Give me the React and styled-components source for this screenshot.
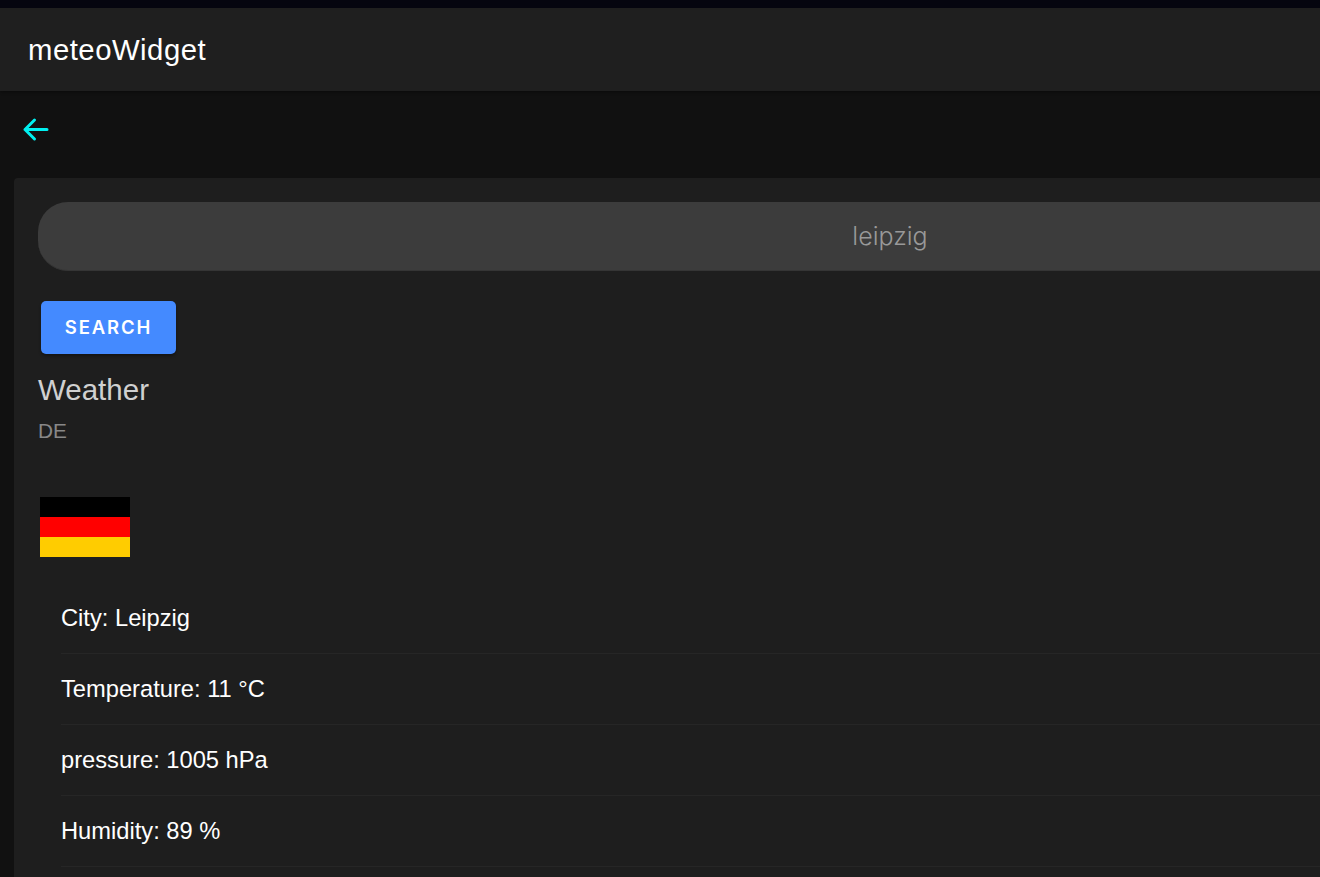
import React from "react";
import styled, { createGlobalStyle } from "styled-components";

const Global = createGlobalStyle`
  html, body { margin: 0; padding: 0; height: 100%; overflow: hidden; background: #05050f; }
  body { font-family: "Liberation Sans", Arial, sans-serif; }
  #root { padding-top: 8px; box-sizing: border-box; height: 100%; }
`;

const Page = styled.div`
  width: 1770px;
  height: 869px;
  background: #111111;
  overflow: hidden;
`;

const Header = styled.header`
  height: 83px;
  background: #1f1f1f;
  display: flex;
  align-items: center;
  padding-left: 28px;
  box-shadow: 0 1px 3px rgba(0, 0, 0, 0.4);
`;

const Title = styled.h1`
  margin: 0;
  font-size: 29.3px;
  font-weight: 400;
  letter-spacing: 0.5px;
  color: #ffffff;
`;

const BackBar = styled.div`
  height: 87px;
  display: flex;
  align-items: center;
  padding: 0 0 10px 22px;
  box-sizing: border-box;
`;

const BackIcon = styled.svg`
  width: 28px;
  height: 28px;
  fill: none;
  stroke: #00f0f0;
  stroke-width: 3;
  stroke-linecap: round;
  stroke-linejoin: round;
  display: block;
`;

const Card = styled.section`
  margin-left: 14px;
  background: #1e1e1e;
  border-radius: 4px;
  padding: 24px 0 0 24px;
  height: 700px;
`;

const SearchInput = styled.div`
  width: 1704px;
  height: 69px;
  border-radius: 30px;
  background: #3c3c3c;
  border-bottom: 1px solid #353535;
  box-sizing: border-box;
  display: flex;
  align-items: center;
  justify-content: center;
  color: #999999;
  font-family: "Inter", sans-serif;
  font-weight: 300;
  font-size: 25px;
`;

const SearchButton = styled.button`
  display: block;
  margin: 30px 0 0 3px;
  width: 135px;
  height: 53px;
  padding: 0 0 2px;
  border: 0;
  border-radius: 5px;
  background: #448aff;
  color: #ffffff;
  font-family: "Inter", sans-serif;
  font-weight: 600;
  font-size: 18.5px;
  letter-spacing: 1.9px;
  box-shadow: 0 2px 3px rgba(0, 0, 0, 0.35);
`;

const Heading = styled.h2`
  margin: 19px 0 0;
  font-size: 29.5px;
  line-height: 34px;
  font-weight: 400;
  color: #d0d0d0;
`;

const Sub = styled.div`
  margin-top: 12px;
  font-size: 20.8px;
  line-height: 24px;
  color: #888888;
`;

const Flag = styled.div`
  margin: 54px 0 0 2px;
  width: 90px;
  height: 60px;
  display: grid;
  grid-template-rows: 1fr 1fr 1fr;
  box-shadow: inset 0 0 0 1px rgba(0, 0, 0, 0.25);
`;

const Stripe = styled.div`
  background: ${(p) => p.$color};
`;

const List = styled.ul`
  list-style: none;
  margin: 26px 0 0 23px;
  padding: 0;
`;

const Row = styled.li`
  height: 71px;
  box-sizing: border-box;
  display: flex;
  align-items: center;
  border-bottom: 1px solid #262626;
  font-size: 23.7px;
  color: #ffffff;
`;

export default function App() {
  const rows = ["City: Leipzig", "Temperature: 11 °C", "pressure: 1005 hPa", "Humidity: 89 %"];
  return (
    <>
      <Global />
      <Page>
        <Header>
          <Title>meteoWidget</Title>
        </Header>
        <BackBar>
          <BackIcon viewBox="0 0 28 28">
            <path d="M25 13.5H3M12.5 4L3 13.5L12.5 23" />
          </BackIcon>
        </BackBar>
        <Card>
          <SearchInput>leipzig</SearchInput>
          <SearchButton>SEARCH</SearchButton>
          <Heading>Weather</Heading>
          <Sub>DE</Sub>
          <Flag>
            <Stripe $color="#000000" />
            <Stripe $color="#ff0000" />
            <Stripe $color="#ffcc00" />
          </Flag>
          <List>
            {rows.map((r) => (
              <Row key={r}>{r}</Row>
            ))}
          </List>
        </Card>
      </Page>
    </>
  );
}
